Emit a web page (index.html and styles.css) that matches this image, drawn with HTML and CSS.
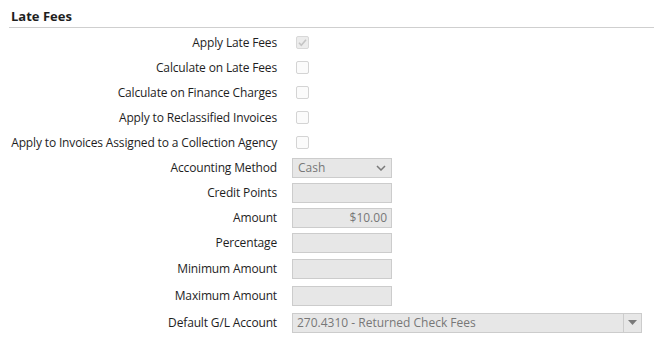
FILE: index.html
```html
<!DOCTYPE html>
<html>
<head>
<meta charset="utf-8">
<link rel="stylesheet" href="styles.css">
</head>
<body>
<div class="section">
  <div class="header">Late Fees</div>
  <div class="form">
    <div class="row"><label class="lbl">Apply Late Fees</label><span class="cb checked"><svg width="11" height="11" viewBox="0 0 11 11"><path d="M2 5.8 L4.3 8.2 L9 2.8" fill="none" stroke="#c4c4c4" stroke-width="1.6"/></svg></span></div>
    <div class="row"><label class="lbl">Calculate on Late Fees</label><span class="cb"></span></div>
    <div class="row"><label class="lbl">Calculate on Finance Charges</label><span class="cb"></span></div>
    <div class="row"><label class="lbl">Apply to Reclassified Invoices</label><span class="cb"></span></div>
    <div class="row"><label class="lbl">Apply to Invoices Assigned to a Collection Agency</label><span class="cb"></span></div>
    <div class="row"><label class="lbl">Accounting Method</label><span class="select"><span class="val">Cash</span><svg class="chev" width="10" height="6" viewBox="0 0 10 6"><path d="M1 1 L5 5 L9 1" fill="none" stroke="#7a7a7a" stroke-width="1.5"/></svg></span></div>
    <div class="row"><label class="lbl">Credit Points</label><span class="input"></span></div>
    <div class="row"><label class="lbl">Amount</label><span class="input num">$10.00</span></div>
    <div class="row"><label class="lbl">Percentage</label><span class="input"></span></div>
    <div class="row tall"><label class="lbl">Minimum Amount</label><span class="input"></span></div>
    <div class="row tall"><label class="lbl">Maximum Amount</label><span class="input"></span></div>
    <div class="row tall"><label class="lbl">Default G/L Account</label><span class="combo"><span class="val">270.4310 - Returned Check Fees</span><span class="btn"><svg width="9" height="5" viewBox="0 0 9 5"><path d="M0 0 H9 L4.5 5 Z" fill="#7a7a7a"/></svg></span></span></div>
  </div>
</div>
</body>
</html>
```

FILE: styles.css
```css
html, body {
  margin: 0;
  padding: 0;
  background: #ffffff;
}
body {
  font-family: "Open Sans", "Noto Sans", sans-serif;
  font-size: 12px;
  color: #1e1e1e;
}
.section {
  padding: 6px 0 0 9px;
}
.header {
  font-weight: bold;
  font-size: 13px;
  padding-left: 2px;
  height: 21px;
  line-height: 21px;
  border-bottom: 1px solid #cfcfcf;
}
.form {
  padding-top: 2px;
}
.row {
  display: flex;
  align-items: center;
  height: 25px;
}
.row.tall {
  height: 27px;
}
.lbl {
  width: 268px;
  text-align: right;
  white-space: nowrap;
  letter-spacing: -0.15px;
  margin-right: 15px;
}
.cb {
  box-sizing: border-box;
  width: 13px;
  height: 13px;
  margin-left: 4px;
  border: 1px solid #d4d4d4;
  border-radius: 2px;
  background: #fbfbfb;
  display: flex;
  align-items: center;
  justify-content: center;
}
.cb.checked {
  background: #ececec;
  border-color: #d8d8d8;
}
.select, .input, .combo {
  box-sizing: border-box;
  height: 20px;
  background: #e7e7e7;
  border: 1px solid #cccccc;
  color: #777777;
  display: flex;
  align-items: center;
}
.select {
  width: 100px;
  padding: 0 5px;
  justify-content: space-between;
}
.input {
  width: 100px;
  padding: 0 4px;
}
.input.num {
  justify-content: flex-end;
}
.combo {
  width: 350px;
  padding-left: 4px;
  justify-content: space-between;
}
.btn {
  width: 17px;
  height: 18px;
  border-left: 1px solid #cccccc;
  display: flex;
  align-items: center;
  justify-content: center;
}
.val {
  white-space: nowrap;
}
```
